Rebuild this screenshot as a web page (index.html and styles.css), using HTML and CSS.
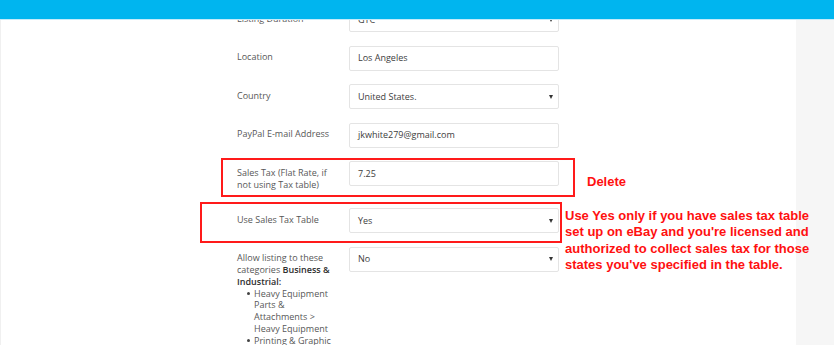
FILE: index.html
```html
<!DOCTYPE html>
<html lang="en">
<head>
<meta charset="utf-8">
<title>Listing settings</title>
<link rel="stylesheet" href="styles.css">
</head>
<body>
<header class="topbar"></header>
<div class="page">
  <main class="main">
    <form class="form">
      <div class="row">
        <label class="label">Listing Duration</label>
        <div class="field select"><span>GTC</span><i class="caret"></i></div>
      </div>
      <div class="row">
        <label class="label">Location</label>
        <div class="field"><span>Los Angeles</span></div>
      </div>
      <div class="row">
        <label class="label">Country</label>
        <div class="field select"><span>United States.</span><i class="caret"></i></div>
      </div>
      <div class="row">
        <label class="label">PayPal E-mail Address</label>
        <div class="field"><span>jkwhite279@gmail.com</span></div>
      </div>
      <div class="row">
        <label class="label">Sales Tax (Flat Rate, if not using Tax table)</label>
        <div class="field"><span>7.25</span></div>
      </div>
      <div class="row">
        <label class="label">Use Sales Tax Table</label>
        <div class="field select"><span>Yes</span><i class="caret"></i></div>
      </div>
      <div class="row">
        <div class="label">Allow listing to these categories <b>Business &amp; Industrial:</b>
          <ul class="cats">
            <li>Heavy Equipment Parts &amp; Attachments &gt; Heavy Equipment</li>
            <li>Printing &amp; Graphic Arts</li>
          </ul>
        </div>
        <div class="field select"><span>No</span><i class="caret"></i></div>
      </div>
    </form>
    <div class="box box-delete"></div>
    <div class="box box-table"></div>
    <p class="note note-delete">Delete</p>
    <p class="note note-table">Use Yes only if you have sales tax table set up on eBay and you're licensed and authorized to collect sales tax for those states you've specified in the table.</p>
  </main>
  <aside class="side"></aside>
</div>
</body>
</html>
```
FILE: styles.css
```css
* { box-sizing: border-box; }
html, body { margin: 0; padding: 0; height: 100%; overflow: hidden; }
body {
  font-family: "Open Sans", "DejaVu Sans", sans-serif;
  font-size: 9px;
  line-height: 11.8px;
  color: #555;
  background: #fff;
}
.topbar {
  position: fixed;
  top: 0; left: 0; right: 0;
  height: 20px;
  background: #00b5ef;
  border-bottom: 1px solid #c4ebfa;
  z-index: 10;
}
.page { display: flex; height: 345px; }
.main {
  position: relative;
  flex: 1;
  border-left: 1px solid #f0f0f0;
}
.side { width: 38px; background: #f6f6f6; }
.form {
  padding: 7px 0 0 236px;
  margin: 0;
}
.row {
  display: grid;
  grid-template-columns: 95px 210px;
  column-gap: 17px;
  margin-bottom: 13.6px;
  align-items: start;
}
.label {
  padding: 5.5px 0 4px;
  color: #575757;
  font-weight: normal;
}
.label b { color: #2e2e2e; font-weight: 600; }
.field {
  height: 25px;
  border: 1px solid #e4e4e4;
  border-radius: 2px;
  background: #fff;
  padding: 0 8px;
  display: flex;
  align-items: center;
  justify-content: space-between;
  color: #3d3d3d;
}
.caret {
  width: 0; height: 0;
  border-left: 2.5px solid transparent;
  border-right: 2.5px solid transparent;
  border-top: 4px solid #333;
  margin-right: -3px;
}
.cats {
  margin: 0;
  padding-left: 17px;
  list-style: none;
}
.cats li { position: relative; }
.cats li::before {
  content: "";
  position: absolute;
  left: -7px;
  top: 4.5px;
  width: 3px;
  height: 3px;
  border-radius: 50%;
  background: #444;
}
.box {
  position: absolute;
  border: 2px solid #ff1a1a;
}
.box-delete { left: 220px; top: 158px; width: 354px; height: 39px; }
.box-table { left: 199px; top: 202px; width: 362px; height: 41px; }
.note {
  position: absolute;
  margin: 0;
  font-family: "Liberation Sans", Arial, sans-serif;
  font-weight: bold;
  font-size: 13px;
  line-height: 16.6px;
  color: #ff1010;
}
.note-delete { left: 586px; top: 173.5px; }
.note-table { left: 564px; top: 207.5px; width: 262px; }
```
